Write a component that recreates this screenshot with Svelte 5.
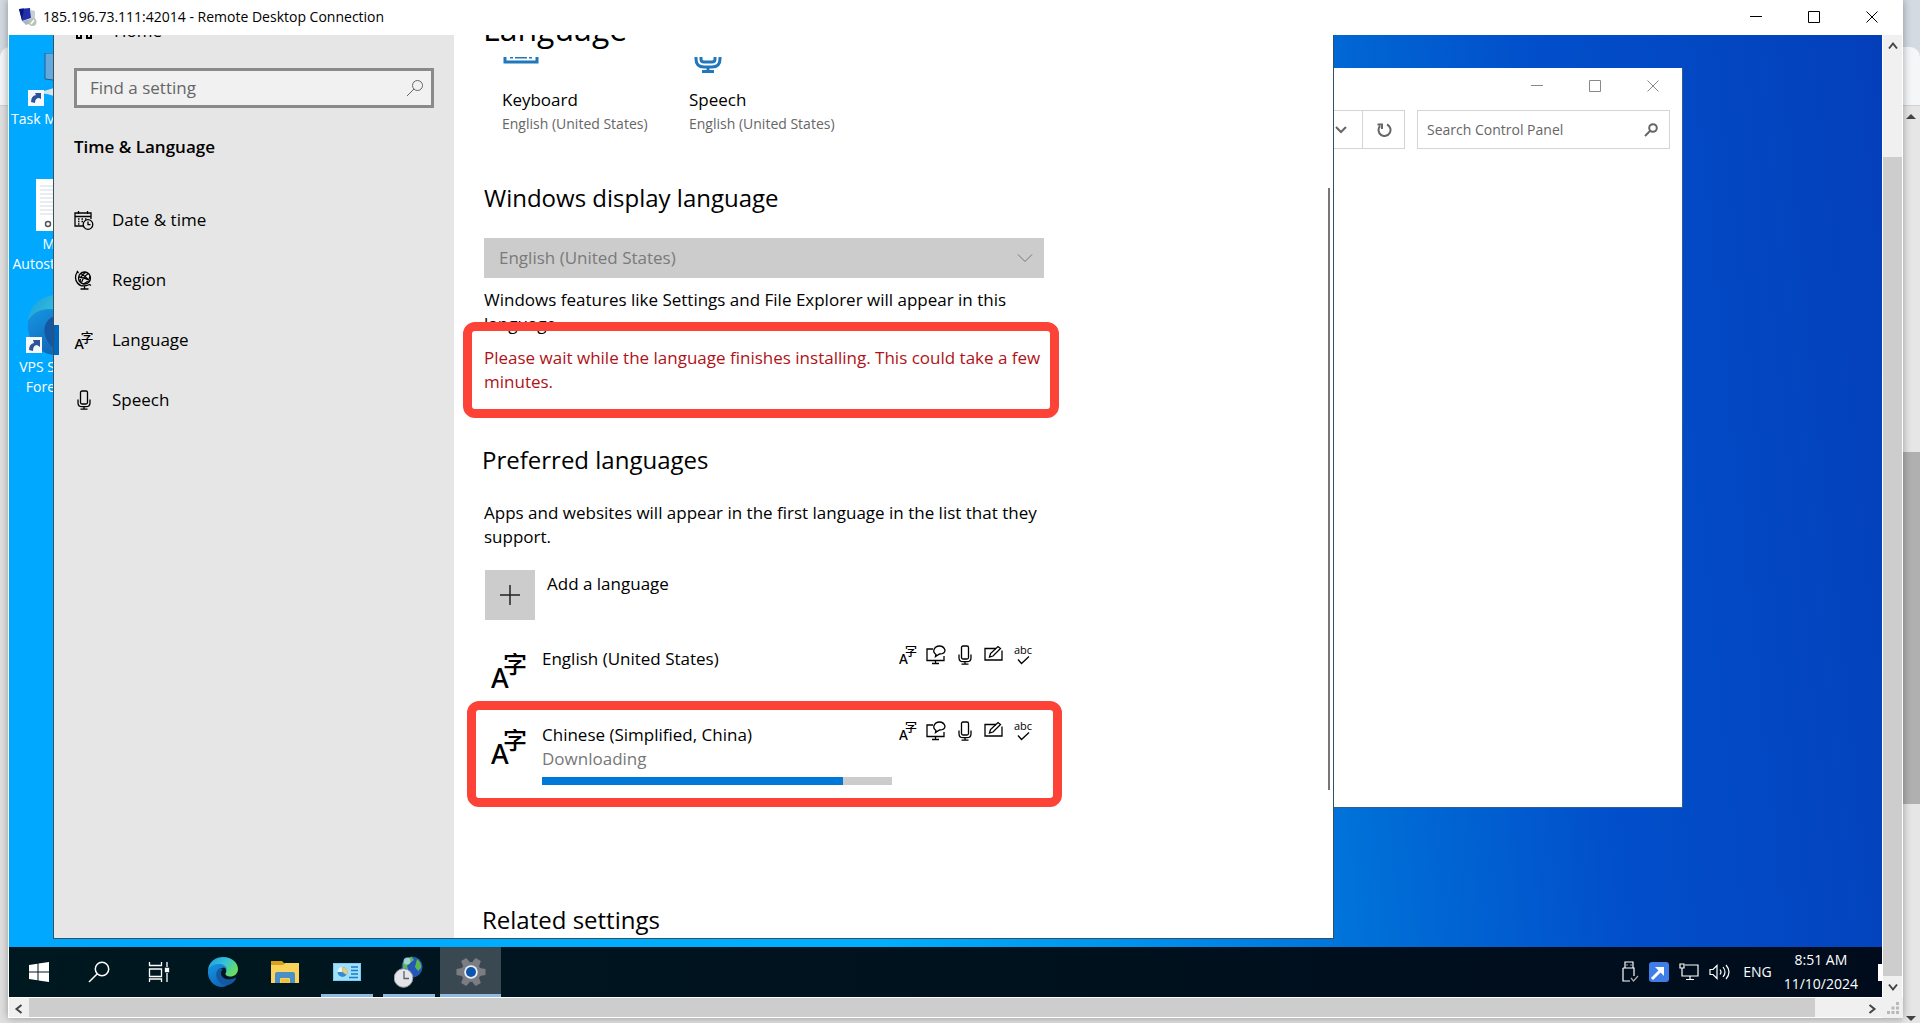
<script lang="ts">
	const host = '185.196.73.111:42014';

	const navItems = [
		{ id: 'date', label: 'Date & time' },
		{ id: 'region', label: 'Region' },
		{ id: 'language', label: 'Language' },
		{ id: 'speech', label: 'Speech' },
	];

	const shortcuts = [
		{ icon: 'task', lines: ['Task M'] },
		{ icon: 'page', lines: ['M', 'Autost'] },
		{ icon: 'edge', lines: ['VPS S', 'Fore'] },
	];

	const languages = [
		{ name: 'English (United States)', status: '', progress: 0 },
		{ name: 'Chinese (Simplified, China)', status: 'Downloading', progress: 86 },
	];

	const apps = [
		{ id: 'edge', label: 'Microsoft Edge', open: false, active: false },
		{ id: 'explorer', label: 'File Explorer', open: false, active: false },
		{ id: 'control', label: 'Control Panel', open: true, active: false },
		{ id: 'clock', label: 'Date and Time', open: true, active: false },
		{ id: 'gear', label: 'Settings', open: true, active: true },
	];

	let query = $state('');
	let cpQuery = $state('');
	let selected = $state('language');
</script>

{#snippet mic(size: number)}
	<svg width={size} height={size} viewBox="0 0 20 20" fill="none" stroke="currentColor" stroke-width="1.300">
		<rect x="6.500" y="1" width="7" height="13" rx="1.500" />
		<path d="M4 9.500v3.200q0 4 4 4h4q4 0 4-4V9.500M10 17v2.200M6.500 19.200h7" />
	</svg>
{/snippet}

{#snippet lang(size: number)}
	<svg width={size} height={size} viewBox="0 0 36 36" fill="currentColor" aria-hidden="true">
		<text x="0" y="35" class="glyph-a">A</text>
		<text x="12" y="20" class="glyph-zi">字</text>
	</svg>
{/snippet}

{#snippet edge(size: number)}
	<svg width={size} height={size} viewBox="0 0 32 32">
		<defs>
			<linearGradient id="edgeTop" x1="0" y1="0" x2="1" y2="0.5">
				<stop offset="0" stop-color="#199bdc" /><stop offset="0.55" stop-color="#34c1dc" /><stop offset="1" stop-color="#68dc62" />
			</linearGradient>
			<linearGradient id="edgeBody" x1="0" y1="0" x2="0.6" y2="1">
				<stop offset="0" stop-color="#1697e4" /><stop offset="1" stop-color="#0f66b6" />
			</linearGradient>
		</defs>
		<path d="M1 14C2 5 9 1 16 1c9 0 15 6 15 12 0 5-4 7.500-7.500 7.500S18 19 18.500 17.500C21 14 18 9 12 9 7 9 3 11 1 14z" fill="url(#edgeTop)" />
		<path d="M1 14c2-4 6-6 11-6 4 0 7 2 8 5-4-3-9 0-9 5 0 6 5 10 11 9-2 2.600-4 4-7 4C7 31 0 24 1 14z" fill="url(#edgeBody)" />
		<path d="M13 12c-3 2-4.500 5-3.500 9 1.500 6 7 9.500 12 8 4-1.300 6.500-4 7.500-6.500.3-.8-.3-1-.8-.7-6 3.200-14.200 1.200-14.200-4.800 0-1.700.6-3 2-3.600z" fill="#1458a4" />
	</svg>
{/snippet}

{#snippet captionIcons()}
	<button aria-label="Minimize"><svg width="12" height="12" viewBox="0 0 12 12"><path d="M0 5.500h12" /></svg></button>
	<button aria-label="Maximize"><svg width="12" height="12" viewBox="0 0 12 12"><path d="M.5.5h11v11H.5z" /></svg></button>
	<button aria-label="Close"><svg width="12" height="12" viewBox="0 0 12 12"><path d="M.5.5l11 11M11.500.5l-11 11" /></svg></button>
{/snippet}

{#snippet navIcon(id: string)}
	{#if id === 'date'}
		<svg width="20" height="20" viewBox="0 0 20 20" fill="none" stroke="currentColor" stroke-width="1.300">
			<path d="M9 16H1V3h16v6M1 6.500h16M4.500 1v3M13.500 1v3" />
			<path d="M4 9h1.500M7.500 9H9M4 11.500h1.500M7.500 11.500H9M4 14h1.500M11 9h1.500" />
			<circle cx="14" cy="14.500" r="4.800" /><path d="M14 11.500v3.200h2.500" />
		</svg>
	{:else if id === 'region'}
		<svg width="20" height="20" viewBox="0 0 20 20" fill="none" stroke="currentColor" stroke-width="1.300">
			<circle cx="10.500" cy="8" r="6" />
			<path d="M6.500 3.500q6 3 8.500 8M14.500 3.500q-5 3-7 9M5 7q6 1 11 3.500M6 12q0-6 6-10M9 14q6-2 7-8" />
			<path d="M3.500 1.500Q-.5 8 3.500 13t12 1.500l1.500 1M3 1l1.500 2M10.500 16v3M6.500 19h8" />
		</svg>
	{:else if id === 'language'}
		{@render lang(19)}
	{:else}
		{@render mic(20)}
	{/if}
{/snippet}

<div class="page">
	<!-- Browser window behind the connection -->
	<div class="backdrop" aria-hidden="true">
		<div class="back-tabs"></div>
		<div class="back-bar"></div>
		<div class="back-body">
			<div class="back-scroll">
				<span class="tri up"></span>
				<span class="back-above"></span>
				<span class="back-thumb"></span>
				<span class="back-below"></span>
				<span class="tri down"></span>
			</div>
		</div>
	</div>

	<div class="rdp">
		<header class="rdp-title">
			<svg width="20" height="20" viewBox="0 0 20 20">
				<path d="M1 2l11-1 1 10-9 3z" fill="#2130a8" /><path d="M1 2l5-.5L4 13z" fill="#0a1680" />
				<path d="M13 3l4 1v10l-4 1z" fill="#c8ced8" /><path d="M4 14l8-2 4 3-8 3z" fill="#a9b4c6" />
				<circle cx="14.500" cy="15" r="4" fill="#b8c4b6" /><path d="M13 17l3-4" stroke="#fff" stroke-width="1.500" />
			</svg>
			<span class="rdp-name">{host} - Remote Desktop Connection</span>
			<div class="caption">{@render captionIcons()}</div>
		</header>

		<div class="rdp-view">
			<div class="screen">
				<!-- ── Desktop ── -->
				<div class="desktop">
					<div class="shortcuts">
						{#each shortcuts as s}
							<div class="shortcut">
								{#if s.icon === 'task'}
									<svg width="50" height="56" viewBox="0 0 50 56">
										<path d="M34 0h16v28l-16-2z" fill="#64a8dc" stroke="#1a5f96" />
										<path d="M26 40l24-7v12l-14-4z" fill="#d8e2ea" />
										<path d="M17 37h16v16H17z" fill="#f4f8fc" /><path d="M20 49q0-6 5-7l-1-2h6v6l-2-1q-4 0-4 5z" fill="#2d5496" />
									</svg>
								{:else if s.icon === 'page'}
									<svg width="50" height="56" viewBox="0 0 50 56">
										<path d="M25 1h25v52H25z" fill="#fff" />
										<path d="M29 8h21M29 12h21M29 16h21M29 20h21M29 24h21M29 28h21M29 32h21M29 36h21" stroke="#d4dade" />
										<circle cx="37" cy="46" r="2.500" fill="none" stroke="#555" stroke-width="1.500" />
									</svg>
								{:else}
									<div class="edge-shortcut">
										{@render edge(64)}
										<svg class="arrow" width="16" height="16" viewBox="0 0 16 16"><path d="M0 0h16v16H0z" fill="#f4f8fc" /><path d="M3 13q0-6 5-7L7 3h7v7l-3-2q-4 0-4 6z" fill="#2d5496" /></svg>
									</div>
								{/if}
								{#each s.lines as l}<span>{l}</span>{/each}
							</div>
						{/each}
					</div>

					<!-- Control Panel -->
					<section class="win control-panel" aria-label="Control Panel">
						<div class="caption light">{@render captionIcons()}</div>
						<div class="cp-bar">
							<div class="cp-address">
								<button aria-label="Previous locations">
									<svg width="12" height="12" viewBox="0 0 12 12"><path d="M1 3l5 5 5-5" /></svg>
								</button>
								<button aria-label="Refresh">
									<svg width="16" height="16" viewBox="0 0 16 16"><path d="M11 2.500A6 6 0 1 1 4 4M1.500 2.500h4.500v4.500" /></svg>
								</button>
							</div>
							<label class="cp-search">
								<input type="text" placeholder="Search Control Panel" aria-label="Search Control Panel" bind:value={cpQuery} />
								<svg width="14" height="14" viewBox="0 0 14 14"><circle cx="9" cy="5" r="3.800" /><path d="M6.500 7.500L1 13" /></svg>
							</label>
						</div>
					</section>

					<!-- Settings -->
					<section class="win settings" aria-label="Settings">
						<nav class="side">
							<a class="home" href="#home">
								<svg width="20" height="20" viewBox="0 0 20 20" fill="none" stroke="currentColor" stroke-width="2"><path d="M2 8l8-6 8 6M3 8v9h4v-5M17 8v9h-4v-5" /></svg>
								Home
							</a>
							<label class="find">
								<input type="text" placeholder="Find a setting" aria-label="Find a setting" bind:value={query} />
								<svg width="18" height="18" viewBox="0 0 18 18"><circle cx="11.500" cy="6.500" r="5" /><path d="M8 10l-7 7" /></svg>
							</label>
							<h3>Time &amp; Language</h3>
							<ul>
								{#each navItems as item}
									<li>
										<a href="#{item.id}" class:selected={selected === item.id} onclick={() => (selected = item.id)}>
											{@render navIcon(item.id)}
											{item.label}
										</a>
									</li>
								{/each}
							</ul>
						</nav>

						<main class="main">
							<h1>Language</h1>
							<div class="scroller">
								<div class="tiles">
									<a class="tile" href="#keyboard">
										<svg class="blue" width="38" height="36" viewBox="0 0 38 36" fill="none" stroke="currentColor" stroke-width="3"><path d="M3 5h32v20H3z" /><path d="M8 20.500h3M13 20.500h12M27 20.500h3" stroke-width="2" /></svg>
										<span>Keyboard</span>
										<small>English (United States)</small>
									</a>
									<a class="tile" href="#speech-settings">
										<svg class="blue" width="38" height="36" viewBox="0 0 38 36" fill="none" stroke="currentColor" stroke-width="3"><path d="M12 2h14v20q0 3-3 3h-8q-3 0-3-3z" /><path d="M7 17v5q0 8 8 8h8q8 0 8-8v-5M19 30v5M13 34.500h12" /></svg>
										<span>Speech</span>
										<small>English (United States)</small>
									</a>
								</div>

								<h2>Windows display language</h2>
								<div class="select">
									<select disabled aria-label="Windows display language">
										<option>English (United States)</option>
									</select>
									<svg width="16" height="16" viewBox="0 0 16 16"><path d="M1 4.500l7 7 7-7" /></svg>
								</div>
								<p class="hint">Windows features like Settings and File Explorer will appear in this language.</p>
								<p class="hint wait">
									Please wait while the language finishes installing. This could take a few minutes.
									<span class="mark"></span>
								</p>

								<h2 class="preferred">Preferred languages</h2>
								<p class="about">Apps and websites will appear in the first language in the list that they support.</p>
								<button class="add">
									<span class="plus"><svg width="20" height="20" viewBox="0 0 20 20"><path d="M10 0v20M0 10h20" /></svg></span>
									<span class="add-label">Add a language</span>
								</button>

								<ul class="langs">
									{#each languages as l}
										<li>
											<span class="lang-icon">{@render lang(36)}</span>
											<div class="lang-text">
												<span>{l.name}</span>
												{#if l.status}
													<span class="status">{l.status}</span>
													<div class="track" role="progressbar" aria-label={l.status} aria-valuenow={l.progress}>
														<div class="fill" style="width: {l.progress}%"></div>
													</div>
												{/if}
											</div>
											<div class="features">
												{@render lang(18)}
												<svg width="20" height="20" viewBox="0 0 20 20" fill="none" stroke="currentColor" stroke-width="1.300">
													<path d="M7 4H1v11.500h17V11M9.500 15.500V18M6 18.500h7" />
													<path d="M10 9.500Q7 7.500 8 4.500 9.500 1 13.500 1T19 5q0 4-5.500 4L9.500 11.500z" />
												</svg>
												{@render mic(20)}
												<svg width="20" height="20" viewBox="0 0 20 20" fill="none" stroke="currentColor" stroke-width="1.300">
													<path d="M12 3.500H1V15h17V5.500" />
													<path d="M5.500 12l1-3.500L14 1.500l2.500 2L9 11z" />
												</svg>
												<svg width="20" height="20" viewBox="0 0 20 20" fill="none" stroke="currentColor" stroke-width="1.300">
													<text x="1" y="9" class="glyph-abc">abc</text>
													<path d="M5 14.500l3.500 4L16 11.500" />
												</svg>
											</div>
											{#if l.status}<span class="mark"></span>{/if}
										</li>
									{/each}
								</ul>

								<h2 class="related">Related settings</h2>
							</div>
							<span class="main-scroll"></span>
						</main>
					</section>
				</div>

				<!-- ── Taskbar ── -->
				<footer class="taskbar">
					<button aria-label="Start"><svg width="20" height="20" viewBox="0 0 20 20" fill="#fff"><path d="M0 3l8.500-1.200v7.700H0zM9.500 1.600L20 0v9.500H9.500zM0 10.500h8.500v7.700L0 17zM9.500 10.500H20V20L9.500 18.400z" /></svg></button>
					<button aria-label="Search"><svg width="22" height="22" viewBox="0 0 22 22" fill="none" stroke="#fff" stroke-width="1.500"><circle cx="14" cy="8" r="6.700" /><path d="M9.300 12.700L1 21" /></svg></button>
					<button aria-label="Task View"><svg width="22" height="20" viewBox="0 0 22 20" fill="none" stroke="#fff" stroke-width="1.300"><path d="M1.500 0v3.500h12V0M1.500 7h12v7.500h-12zM1.500 20v-3h12v3M19 0v5M19 11v9" /><path d="M17.500 6.500h3v3h-3z" fill="#fff" /></svg></button>
					<span class="gap"></span>
					{#each apps as app}
						<button class="app" class:open={app.open} class:active={app.active} aria-label={app.label}>
							{#if app.id === 'edge'}
								{@render edge(32)}
							{:else if app.id === 'explorer'}
								<svg width="28" height="26" viewBox="0 0 28 26">
									<path d="M0 2h11l3 3H28v6H0z" fill="#d9a01c" /><path d="M0 6h12l2-2h14v20H0z" fill="#fbd25a" />
									<path d="M4 24v-9q0-2 2-2h16q2 0 2 2v9h-5v-4q0-1-1-1h-8q-1 0-1 1v4z" fill="#4a90c8" /><path d="M10 24v-3q0-1 1-1h6q1 0 1 1v3z" fill="#f0c040" />
								</svg>
							{:else if app.id === 'control'}
								<svg width="28" height="22" viewBox="0 0 28 22">
									<path d="M0 2h28v18H0z" fill="#7ccdf4" /><path d="M1 3h26v16H1z" fill="#9fe0fb" />
									<circle cx="9.500" cy="11" r="5" fill="#e8f6fc" /><path d="M9.500 11V6a5 5 0 1 1-5 5z" fill="#2c8fd6" /><path d="M9.500 11V6a5 5 0 0 1 4 8z" fill="#f0c878" />
									<path d="M18 6h7M18 9.500h7M18 13h7M16 16.500h9" stroke="#1c7cc4" stroke-width="1.500" />
								</svg>
							{:else if app.id === 'clock'}
								<svg width="30" height="32" viewBox="0 0 30 32">
									<circle cx="18" cy="11" r="10.500" fill="#2356b8" /><path d="M9 7q4-6 9-6l2 3-4 3-3 3 1 3-5-1zM23 3q5 4 4 9l-3 3-3-4z" fill="#5cb84c" />
									<circle cx="13" cy="5" r="3.500" fill="#b4dcf4" opacity=".8" />
									<circle cx="9.500" cy="22" r="9.300" fill="#e4e6ea" stroke="#9a9ea6" /><path d="M10 15v7.500h5" fill="none" stroke="#5a6068" stroke-width="1.300" />
								</svg>
							{:else}
								<svg width="30" height="30" viewBox="0 0 30 30">
									<circle cx="15" cy="15" r="10" fill="#7b7d82" />
									<g fill="#7b7d82">
										{#each [30, 90, 150, 210, 270, 330] as a}<path d="M11 6l1-5.500h6L19 6z" transform="rotate({a} 15 15)" />{/each}
									</g>
									<circle cx="15" cy="15" r="6.800" fill="#e8f0fa" /><circle cx="15" cy="15" r="5" fill="#0f55ac" />
								</svg>
							{/if}
						</button>
					{/each}

					<div class="tray">
						<svg width="18" height="22" viewBox="0 0 18 22" fill="none" stroke="#fff" stroke-width="1.200"><path d="M4 7V1h8v6M2 7h11v8M2 7v13h7M6 3.500v1M10 3.500v1" /><path d="M10 17l2.500 3L17 15" stroke="#aaa" /></svg>
						<svg width="20" height="20" viewBox="0 0 20 20"><rect width="20" height="20" rx="3" fill="#3f7ee8" /><path d="M3 17l8-8" stroke="#fff" stroke-width="3" /><path d="M6 5h9v9z" fill="#fff" /></svg>
						<svg width="20" height="20" viewBox="0 0 20 20" fill="none" stroke="#fff" stroke-width="1.200"><path d="M6 3h13v11H3V8M1 2h4v4H1zM3 6v2M11 14v3M7 17.500h8" /></svg>
						<svg width="22" height="20" viewBox="0 0 22 20" fill="none" stroke="#fff" stroke-width="1.200"><path d="M1 7.500h3l4-4v13l-4-4H1zM11 7.500q2 2.500 0 5M14 5q4 5 0 10" /><path d="M17 3q6 7 0 14" /></svg>
						<span class="input">ENG</span>
						<time><span>8:51 AM</span><span>11/10/2024</span></time>
						<span class="notice"></span>
					</div>
				</footer>
			</div>

			<!-- ── Viewport scrollbars ── -->
			<div class="vbar">
				<button aria-label="Scroll up"><svg width="10" height="10" viewBox="0 0 10 10"><path d="M1 7.500l4-5 4 5" /></svg></button>
				<span class="vspace"></span>
				<span class="thumb"></span>
				<button aria-label="Scroll down"><svg width="10" height="10" viewBox="0 0 10 10"><path d="M1 2.500l4 5 4-5" /></svg></button>
			</div>
			<div class="hbar">
				<button aria-label="Scroll left"><svg width="10" height="10" viewBox="0 0 10 10"><path d="M7.500 1l-5 4 5 4" /></svg></button>
				<span class="thumb"></span>
				<span class="hspace"></span>
				<button aria-label="Scroll right"><svg width="10" height="10" viewBox="0 0 10 10"><path d="M2.500 1l5 4-5 4" /></svg></button>
			</div>
			<div class="grip">
				<svg width="12" height="12" viewBox="0 0 12 12" fill="#b8b8b8"><path d="M9 0h3v3H9zM9 4.500h3v3H9zM4.500 4.500h3v3h-3zM0 9h3v3H0zM4.500 9h3v3h-3zM9 9h3v3H9z" /></svg>
			</div>
		</div>
	</div>
</div>

<style>
	:global(body) {
		overflow: hidden;
	}

	.page {
		position: relative;
		display: flex;
		height: 100vh;
		padding: 0 17px 5px 8px;
		box-sizing: border-box;
		font-family: 'Open Sans', 'Noto Sans', 'Noto Sans CJK SC', sans-serif;
		font-size: 17px;
		line-height: 24px;
		color: #000;
	}

	button,
	input,
	select {
		font: inherit;
		color: inherit;
		background: none;
		border: 0;
		padding: 0;
		margin: 0;
		outline: 0;
	}

	a { color: inherit; text-decoration: none; }
	h1, h2, h3, p, ul { margin: 0; padding: 0; font-weight: 400; }
	ul { list-style: none; }
	svg { display: block; flex-shrink: 0; }

	.glyph-a { font: 500 27px 'Noto Sans', sans-serif; }
	.glyph-zi { font: 500 24px 'Noto Sans CJK SC', sans-serif; }
	.glyph-abc { font: 11px 'Open Sans', sans-serif; fill: currentColor; stroke: none; }

	/* ── Window behind ── */
	.backdrop {
		position: absolute;
		inset: 0;
		display: flex;
		flex-direction: column;
		background: #d3dae2;
	}
	.back-tabs { height: 47px; }
	.back-bar {
		height: 58px;
		background: #f5f6f8;
		border-radius: 10px 10px 0 0;
		border-bottom: 1px solid #d0d2d6;
	}
	.back-body {
		flex: 1;
		display: flex;
		justify-content: flex-end;
		background: #e0e0e0;
	}
	.back-scroll {
		display: flex;
		flex-direction: column;
		align-items: center;
		width: 18px;
		padding: 8px 0 2px;
		background: #e6e6e6;
	}
	.back-above { flex: 33; }
	.back-thumb {
		flex: 35;
		width: 100%;
		background: #b0b0b0;
	}
	.back-below { flex: 21; }
	.tri { border: 5px solid transparent; }
	.tri.up { border-top: 0; border-bottom-color: #444; }
	.tri.down { border-bottom: 0; border-top-color: #444; }

	/* ── Connection window ── */
	.rdp {
		position: relative;
		flex: 1;
		display: flex;
		flex-direction: column;
		background: #fff;
		box-shadow: 0 0 8px rgba(0, 0, 0, 0.35);
	}
	.rdp-title {
		display: flex;
		align-items: center;
		height: 33px;
		padding: 0 2px 2px 10px;
		font-size: 14px;
	}
	.rdp-name { flex: 1; margin-left: 5px; }

	.caption { display: flex; justify-content: flex-end; }
	.caption button {
		display: flex;
		align-items: center;
		justify-content: center;
		width: 58px;
	}
	.caption svg { fill: none; stroke: #000; }
	.caption.light svg { stroke: #888; }

	.rdp-view {
		flex: 1;
		display: grid;
		grid-template: 1fr 21px / 1fr 21px;
		padding-left: 1px;
		min-height: 0;
	}
	.screen {
		display: flex;
		flex-direction: column;
		overflow: hidden;
	}

	.desktop {
		position: relative;
		flex: 1;
		overflow: hidden;
		background: linear-gradient(84deg, #00a8ff 0%, #00b0ff 44%, #0092ee 57%, #0068d4 72%, #024fcb 82%, #043fba 100%);
	}
	.shortcuts {
		display: flex;
		flex-direction: column;
		gap: 19px;
		padding-top: 18px;
		font-size: 14px;
		line-height: 20px;
		color: #fff;
	}
	.shortcut {
		display: flex;
		flex-direction: column;
		width: 44px;
		padding-left: 2px;
		overflow: hidden;
	}
	.shortcut:first-child { padding-bottom: 30px; }
	.shortcut span { white-space: nowrap; }
	.shortcut:nth-child(n + 2) span { text-align: right; }
	.edge-shortcut { position: relative; padding-left: 15px; }
	.edge-shortcut .arrow { position: absolute; left: 15px; bottom: 4px; }

	.win { position: absolute; background: #fff; }

	/* ── Control Panel ── */
	.control-panel {
		top: 33px;
		right: 199px;
		bottom: 139px;
		left: 60%;
		border: solid #2c6090;
		border-width: 0 1px 1px 0;
	}
	.control-panel .caption { height: 36px; }
	.cp-bar {
		display: flex;
		justify-content: flex-end;
		gap: 12px;
		margin-top: 6px;
		padding-right: 12px;
	}
	.cp-address {
		flex: 1;
		display: flex;
		justify-content: flex-end;
		height: 37px;
		border: 1px solid #d4d4d4;
	}
	.cp-address button {
		display: flex;
		align-items: center;
		justify-content: center;
		width: 42px;
	}
	.cp-address button + button { border-left: 1px solid #d4d4d4; }
	.cp-address svg, .cp-search svg { fill: none; stroke: #666; stroke-width: 2; }
	.cp-search {
		display: flex;
		align-items: center;
		width: 231px;
		height: 37px;
		padding: 0 11px 0 9px;
		border: 1px solid #d4d4d4;
		font-size: 14px;
	}
	.cp-search input { flex: 1; min-width: 0; }
	input::placeholder { color: #666; opacity: 1; }

	/* ── Settings ── */
	.settings {
		top: -24px;
		left: 44px;
		bottom: 8px;
		width: 68.3%;
		display: flex;
		border: 1px solid #35505e;
	}
	.side {
		width: 400px;
		flex-shrink: 0;
		background: #e6e6e6;
	}
	.home {
		display: flex;
		align-items: center;
		gap: 20px;
		height: 38px;
		padding-left: 20px;
	}
	.find {
		display: flex;
		align-items: center;
		height: 34px;
		margin: 18px 20px 0;
		padding: 0 7px 0 13px;
		border: 3px solid #8a8a8a;
		background: #f1f1f1;
	}
	.find input { flex: 1; min-width: 0; }
	.find svg { fill: none; stroke: #666; stroke-width: 1; }
	.side h3 {
		margin: 27px 20px 31px;
		font-size: 17px;
		font-weight: 600;
	}
	.side li a {
		position: relative;
		display: flex;
		align-items: center;
		gap: 18px;
		height: 60px;
		padding-left: 20px;
	}
	.side li svg { width: 20px; }
	.side li a.selected::before {
		content: '';
		position: absolute;
		left: 0;
		top: 15px;
		bottom: 15px;
		width: 5px;
		background: #0067c0;
	}

	.main {
		position: relative;
		flex: 1;
		display: flex;
		flex-direction: column;
		min-width: 0;
	}
	h1 {
		height: 45px;
		padding-left: 29px;
		font-size: 32px;
		line-height: 34px;
	}
	.scroller {
		flex: 1;
		min-height: 0;
		overflow: hidden;
		padding-left: 30px;
	}
	.main-scroll {
		position: absolute;
		right: 3px;
		top: 19%;
		bottom: 16%;
		width: 2px;
		background: #777;
	}
	.tiles {
		display: flex;
		margin-top: -20px;
		padding-left: 18px;
	}
	.tile {
		display: flex;
		flex-direction: column;
		width: 187px;
	}
	.tile span { margin-top: 15px; }
	.tile small { font-size: 14px; color: #666; }
	.blue { color: #1f78bc; }
	h2 {
		margin-top: 46px;
		font-size: 24px;
		line-height: 32px;
	}
	.select {
		display: grid;
		align-items: center;
		width: 560px;
		height: 40px;
		margin-top: 24px;
		background: #ccc;
	}
	.select select {
		grid-area: 1 / 1;
		appearance: none;
		height: 40px;
		padding-left: 15px;
		color: #7a7a7a;
		opacity: 1;
	}
	.select svg {
		grid-area: 1 / 1;
		justify-self: end;
		margin-right: 11px;
		fill: none;
		stroke: #777;
	}
	.hint, .about { width: 570px; }
	.hint { margin-top: 10px; }
	.wait { position: relative; color: #b01217; }
	.mark {
		position: absolute;
		border: 9px solid #fd4338;
		border-radius: 12px;
	}
	.wait .mark { inset: -24px -5px -24px -21px; }
	.preferred, .related { margin-left: -2px; }
	.preferred { margin-top: 50px; }
	.about { margin-top: 25px; }
	.add {
		display: flex;
		gap: 12px;
		margin: 21px 0 26px 1px;
		text-align: left;
	}
	.add-label { padding-top: 2px; }
	.plus {
		display: grid;
		place-items: center;
		width: 50px;
		height: 50px;
		background: #ccc;
	}
	.plus svg { stroke: #222; stroke-width: 1.5; }

	.langs { width: 570px; }
	.langs li {
		position: relative;
		display: flex;
		height: 76px;
		padding-left: 7px;
	}
	.lang-icon { margin-top: 7px; }
	.lang-text {
		display: flex;
		flex-direction: column;
		width: 350px;
		margin-left: 15px;
		padding-top: 1px;
	}
	.status { color: #777; }
	.track { height: 8px; margin-top: 6px; background: #ccc; }
	.fill { height: 100%; background: #0078d7; }
	.features {
		display: flex;
		align-items: center;
		gap: 9px;
		height: 18px;
		margin-left: 7px;
	}
	.langs .mark { inset: -21px -8px -9px -17px; }
	.related { margin-top: 106px; }

	/* ── Taskbar ── */
	.taskbar {
		display: flex;
		height: 50px;
		background: linear-gradient(90deg, #001820, #000c1c);
		color: #fff;
	}
	.taskbar button {
		display: grid;
		place-items: center;
		width: 60px;
		height: 50px;
	}
	.gap { width: 3px; }
	.taskbar .app { width: 52px; margin: 0 5px; }
	.taskbar .open { box-shadow: inset 0 -3px #8fbbe0; }
	.taskbar .active { width: 61px; margin: 0; background: #3a4852; }
	.tray {
		display: flex;
		align-items: center;
		gap: 10px;
		margin-left: auto;
		font-size: 14px;
	}
	.input { margin-left: 2px; }
	time {
		display: flex;
		flex-direction: column;
		align-items: center;
		margin-left: 2px;
	}
	.notice {
		width: 4px;
		height: 17px;
		margin-left: 10px;
		background: #fff;
	}

	/* ── Scrollbars ── */
	.vbar, .hbar { display: flex; background: #f0f0f0; }
	.vbar { flex-direction: column; border: solid #fff; border-width: 0 1px; }
	.hbar { border-top: 1px solid #fff; border-bottom: 1px solid #fff; }
	.vbar button, .hbar button { display: grid; place-items: center; width: 20px; height: 21px; }
	.vbar svg, .hbar svg { fill: none; stroke: #444; stroke-width: 2; }
	.thumb { background: #cdcdcd; }
	.vspace { flex: 11; }
	.vbar .thumb { flex: 89; }
	.hspace { flex: 1; }
	.hbar .thumb { flex: 38; }
	.grip {
		display: grid;
		place-items: center;
		background: #f0f0f0;
	}
</style>
